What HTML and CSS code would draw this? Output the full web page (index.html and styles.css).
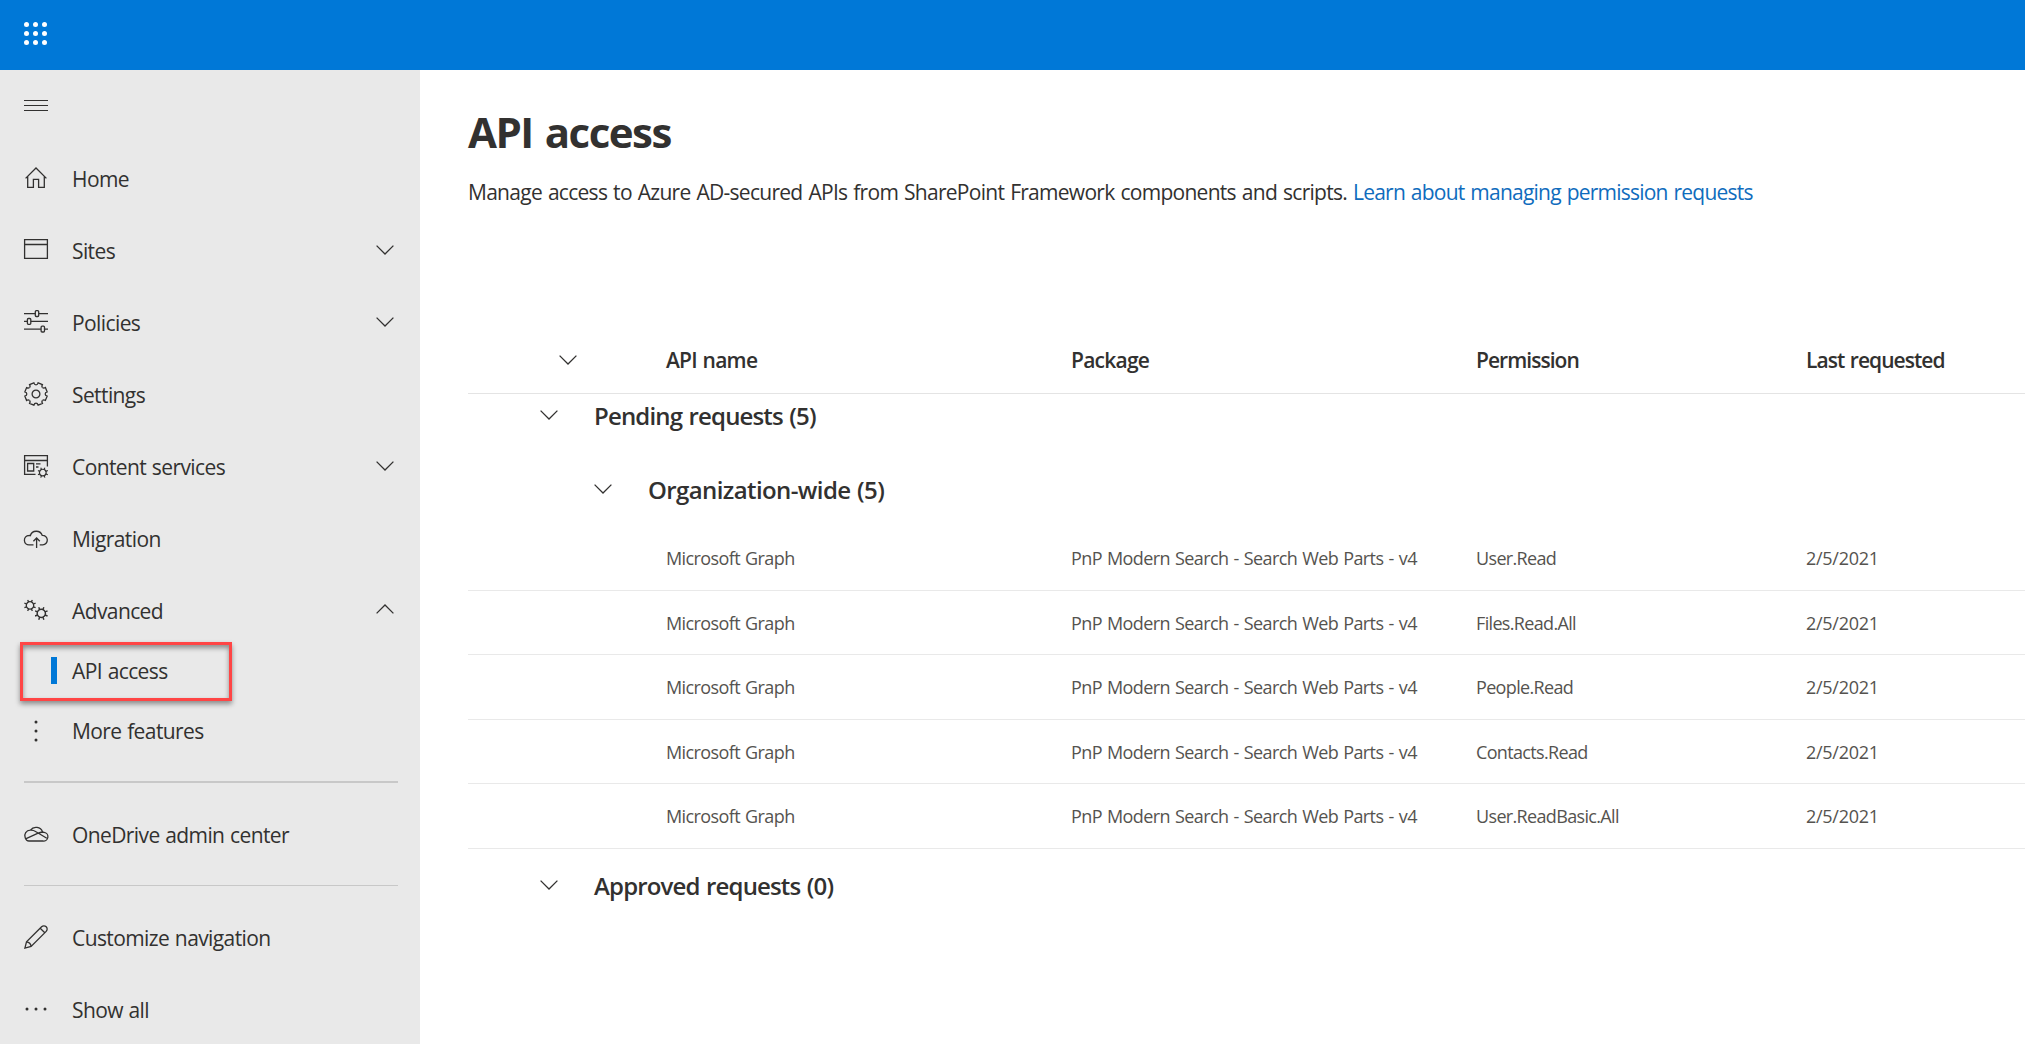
FILE: index.html
```html
<!DOCTYPE html>
<html lang="en">
<head>
<meta charset="utf-8">
<title>API access</title>
<link rel="stylesheet" href="styles.css">
</head>
<body>
<svg class="defs" aria-hidden="true">
  <symbol id="chevron" viewBox="0 0 18 10"><path d="M.6.6 9 9 17.4.6"/></symbol>
  <symbol id="cog" viewBox="-12 -12 24 24">
    <g id="cog-half">
      <path id="tooth" d="M0-9.2Q1.6-9.2 2.1-11.2L6.4-9.4Q5.4-7.6 6.5-6.5"/>
      <use href="#tooth" transform="rotate(45)"/>
      <use href="#tooth" transform="rotate(90)"/>
      <use href="#tooth" transform="rotate(135)"/>
    </g>
    <use href="#cog-half" transform="rotate(180)"/>
    <circle r="3.9"/>
  </symbol>
  <symbol id="mini-cog" viewBox="-6 -6 12 12">
    <circle r="3.7"/>
    <path d="M1.4-3.3 2.3-5.6M3.3-1.4 5.6-2.3M3.3 1.4 5.6 2.3M1.4 3.3 2.3 5.6M-1.4 3.3-2.3 5.6M-3.3 1.4-5.6 2.3M-3.3-1.4-5.6-2.3M-1.4-3.3-2.3-5.6"/>
  </symbol>
</svg>

<header class="topbar">
  <svg class="waffle" viewBox="0 0 24 24">
    <circle cx="2.5" cy="2.5" r="2.5"/><circle cx="11.5" cy="2.5" r="2.5"/><circle cx="20.5" cy="2.5" r="2.5"/>
    <circle cx="2.5" cy="11.5" r="2.5"/><circle cx="11.5" cy="11.5" r="2.5"/><circle cx="20.5" cy="11.5" r="2.5"/>
    <circle cx="2.5" cy="20.5" r="2.5"/><circle cx="11.5" cy="20.5" r="2.5"/><circle cx="20.5" cy="20.5" r="2.5"/>
  </svg>
</header>

<div class="shell">
  <nav class="sidebar">
    <div class="menu-toggle"><svg class="icon" viewBox="0 0 24 24"><path class="crisp" d="M0 6.5H24M0 11.5H24M0 16.5H24"/></svg></div>

    <a class="nav-item"><svg class="icon" viewBox="0 0 24 24"><path d="M1.6 12.4 12 2 22.4 12.4M3.7 10.4V21.4H9.4V13.4H14.6V21.4H20.3V10.4"/></svg><span>Home</span></a>
    <a class="nav-item"><svg class="icon" viewBox="0 0 24 24"><path d="M.6 1.6H23.4V20.4H.6ZM.6 6.5H23.4"/></svg><span>Sites</span><svg class="chevron"><use href="#chevron"/></svg></a>
    <a class="nav-item"><svg class="icon" viewBox="0 0 24 24"><path d="M0 3.6H11.2M14.8 3.6H24M0 11.4H3.3M6.9 11.4H24M0 19.1H17M20.6 19.1H24"/><rect x="11.3" y=".7" width="3.4" height="5.8" rx="1"/><rect x="3.4" y="8.5" width="3.4" height="5.8" rx="1"/><rect x="17.1" y="16.2" width="3.4" height="5.8" rx="1"/></svg><span>Policies</span><svg class="chevron"><use href="#chevron"/></svg></a>
    <a class="nav-item"><svg class="icon"><use href="#cog"/></svg><span>Settings</span></a>
    <a class="nav-item"><svg class="icon" viewBox="0 0 24 24"><path d="M11.5 20.4H.6V1.6H23.4V12.5M.6 6.5H23.4M3.6 9.5H9.7V17H3.6ZM12 9.8H16.5M12 13H14.5"/><svg x="13.4" y="13.2" width="10.8" height="10.8"><use href="#mini-cog"/></svg></svg><span>Content services</span><svg class="chevron"><use href="#chevron"/></svg></a>
    <a class="nav-item"><svg class="icon" viewBox="0 0 24 24"><path d="M9.5 18.9H5.3A4.7 4.7 0 0 1 4.9 9.5Q5.6 9.4 6.3 9.7A6.3 6.3 0 0 1 18.2 9.3A4.8 4.8 0 0 1 18.8 18.9H15.7M12.6 22V12M9.4 15.2 12.6 12 15.8 15.2"/></svg><span>Migration</span></a>
    <a class="nav-item nav-item-open"><svg class="icon" viewBox="0 0 24 24"><svg x="0" y="1.4" width="12" height="12"><use href="#mini-cog"/></svg><svg x="10.6" y="8.7" width="13.4" height="13.4"><use href="#mini-cog"/></svg></svg><span>Advanced</span><svg class="chevron chevron-up"><use href="#chevron"/></svg></a>
    <a class="nav-item nav-sub"><i class="marker"></i><span>API access</span><b class="callout"></b></a>
    <a class="nav-item nav-more"><svg class="icon dots" viewBox="0 0 24 24"><circle cx="12" cy="3" r="1.5"/><circle cx="12" cy="12" r="1.5"/><circle cx="12" cy="21" r="1.5"/></svg><span>More features</span></a>
    <hr class="rule rule-thick">
    <a class="nav-item"><svg class="icon" viewBox="0 0 24 24"><path d="M5 19H18.8A4.4 4.4 0 0 0 20.2 10.3Q19.6 10 18.6 10A7 7 0 0 0 6.4 8.1A5.5 5.5 0 0 0 1.2 15.8Q2.2 19 5 19M6.4 8.1Q9.5 8 12 9.7L22.8 16.2M1.6 16.8 13.6 11.4Q16.2 10.1 18.6 10"/></svg><span>OneDrive admin center</span></a>
    <hr class="rule">
    <a class="nav-item"><svg class="icon" viewBox="0 0 24 24"><path d="M.9 23.1 2.5 16.9 17.6 1.8A3.2 3.2 0 0 1 22.2 6.4L7.1 21.5ZM2.5 16.9Q6.6 17.4 7.1 21.5M16.2 3.2 20.8 7.8"/></svg><span>Customize navigation</span></a>
    <a class="nav-item"><svg class="icon dots" viewBox="0 0 24 24"><circle cx="3" cy="12" r="1.5"/><circle cx="12" cy="12" r="1.5"/><circle cx="21" cy="12" r="1.5"/></svg><span>Show all</span></a>
  </nav>

  <main class="content">
    <h1>API access</h1>
    <p class="intro">Manage access to Azure AD-secured APIs from SharePoint Framework components and scripts. <a>Learn about managing permission requests</a></p>

    <section class="grid">
      <div class="row head">
        <span class="toggle"><svg class="chevron"><use href="#chevron"/></svg></span>
        <span>API name</span><span>Package</span><span class="snug">Permission</span><span class="snug">Last requested</span>
      </div>
      <h2 class="group"><svg class="chevron"><use href="#chevron"/></svg>Pending requests (5)</h2>
      <h3 class="group group-nested"><svg class="chevron"><use href="#chevron"/></svg>Organization-wide (5)</h3>
      <div class="rows">
        <div class="row"><span></span><span>Microsoft Graph</span><span>PnP Modern Search - Search Web Parts - v4</span><span class="perm">User.Read</span><span class="date">2/5/2021</span></div>
        <div class="row"><span></span><span>Microsoft Graph</span><span>PnP Modern Search - Search Web Parts - v4</span><span class="perm">Files.Read.All</span><span class="date">2/5/2021</span></div>
        <div class="row"><span></span><span>Microsoft Graph</span><span>PnP Modern Search - Search Web Parts - v4</span><span class="perm">People.Read</span><span class="date">2/5/2021</span></div>
        <div class="row"><span></span><span>Microsoft Graph</span><span>PnP Modern Search - Search Web Parts - v4</span><span class="perm">Contacts.Read</span><span class="date">2/5/2021</span></div>
        <div class="row"><span></span><span>Microsoft Graph</span><span>PnP Modern Search - Search Web Parts - v4</span><span class="perm">User.ReadBasic.All</span><span class="date">2/5/2021</span></div>
      </div>
      <h2 class="group group-approved"><svg class="chevron"><use href="#chevron"/></svg>Approved requests (0)</h2>
    </section>
  </main>
</div>
</body>
</html>
```
FILE: styles.css
```css
* { box-sizing: border-box; }

body {
  margin: 0;
  height: 1044px;
  overflow: hidden;
  display: flex;
  flex-direction: column;
  background: #fff;
  color: #323130;
  font: 400 21px/30px "Open Sans", "Noto Sans", sans-serif;
}

.defs { position: absolute; width: 0; height: 0; }

.topbar {
  flex: none;
  height: 70px;
  padding: 22px 24px;
  background: #0078d7;
}

.waffle { display: block; width: 24px; height: 24px; fill: #fff; }

.shell { flex: 1; min-height: 0; display: flex; }

/* Navigation */
.sidebar {
  flex: none;
  width: 420px;
  padding: 24px 22px 0 24px;
  overflow: hidden;
  background: #e9e9e9;
  letter-spacing: -0.6px;
  word-spacing: 0.8px;
}

.menu-toggle { height: 49px; }

.icon {
  flex: none;
  display: block;
  width: 24px;
  height: 24px;
  overflow: visible;
  fill: none;
  stroke: #323130;
  stroke-width: 1.3;
}

.crisp { stroke-width: 1; }
.dots { fill: #323130; stroke: none; }

.nav-item {
  display: flex;
  align-items: center;
  height: 72px;
  gap: 24px;
  white-space: nowrap;
}

.nav-item > .icon { margin-bottom: 2px; }

.chevron {
  flex: none;
  width: 18px;
  height: 10px;
  fill: none;
  stroke: #323130;
  stroke-width: 1.3;
}

.nav-item .chevron { margin: 0 4px 2px auto; }
.nav-item .chevron-up { transform: rotate(180deg); margin-bottom: 4px; }

.nav-item-open { height: 60px; margin-top: 6px; }
.nav-more { height: 60px; }
.nav-more > .icon { margin-bottom: 0; }

.nav-sub {
  position: relative;
  height: 60px;
  padding-left: 27px;
  gap: 15px;
}

.marker { width: 6px; height: 27px; margin-bottom: 1px; background: #0078d7; }

.callout {
  position: absolute;
  left: -4px;
  top: 1px;
  width: 212px;
  height: 59px;
  border: 3px solid #ff4545;
  box-shadow: 0 3px 5px rgba(0, 0, 0, .4), inset 0 3px 5px rgba(0, 0, 0, .4);
}

.rule {
  width: 374px;
  height: 1px;
  margin: 14px 0 16px;
  border: 0;
  background: #c8c8c8;
}

.rule-thick { height: 2px; margin: 20px 0 16px; }

/* Page */
.content { flex: 1; min-width: 0; padding: 34px 0 0 48px; }

h1 {
  margin: 0;
  font-size: 42px;
  line-height: 56px;
  font-weight: 700;
  letter-spacing: -1.5px;
  word-spacing: 2.5px;
}

.intro {
  margin: 17px 0 0;
  white-space: nowrap;
  letter-spacing: -0.72px;
  word-spacing: 1.2px;
}

.intro a { color: #0f6cbd; letter-spacing: -0.78px; }

.grid { margin-top: 119px; }

.row {
  display: grid;
  grid-template-columns: 198px 405px 405px 330px 1fr;
  align-items: center;
  height: 65px;
  border-bottom: 1px solid #e9e9e9;
  color: #55534f;
  font-size: 18px;
  letter-spacing: -0.6px;
  word-spacing: 1px;
  white-space: nowrap;
}

.rows .row:nth-child(even) { height: 64px; }
.perm { letter-spacing: -0.66px; }
.date { letter-spacing: -0.28px; }

.head {
  height: 68px;
  border-color: #e4e4e4;
  color: #323130;
  font-size: 21px;
  font-weight: 600;
  letter-spacing: -0.76px;
}

.snug { letter-spacing: -0.96px; }

.toggle { display: flex; padding-left: 91px; }

.group {
  display: flex;
  align-items: center;
  gap: 36px;
  height: 44px;
  margin: 0;
  padding-left: 72px;
  font-size: 24px;
  font-weight: 600;
  letter-spacing: -0.84px;
  word-spacing: 1px;
}

.group .chevron { margin-bottom: 2px; }

.group-nested {
  height: 56px;
  margin: 24px 0 8px;
  padding-left: 126px;
  letter-spacing: -0.6px;
}

.group-approved { height: 74px; }
```
